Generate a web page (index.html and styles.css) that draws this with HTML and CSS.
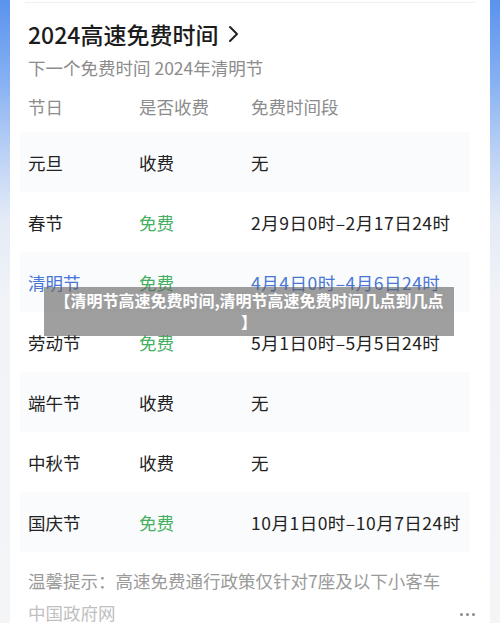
FILE: index.html
```html
<!DOCTYPE html>
<html lang="zh-CN">
<head>
<meta charset="utf-8">
<title>2024高速免费时间</title>
<link rel="stylesheet" href="styles.css">
</head>
<body>
<div class="card">
  <div class="sep"></div>
  <div class="title">2024高速免费时间
    <svg class="chev" width="12" height="18" viewBox="0 0 12 18"><polyline points="2,2 9,9 2,16" fill="none" stroke="#222" stroke-width="2" stroke-linecap="round" stroke-linejoin="round"/></svg>
  </div>
  <div class="sub">下一个免费时间 2024年清明节</div>
  <div class="table">
    <div class="row head"><span class="c1">节日</span><span class="c2">是否收费</span><span class="c3">免费时间段</span></div>
    <div class="row band"><span class="c1">元旦</span><span class="c2">收费</span><span class="c3">无</span></div>
    <div class="row"><span class="c1">春节</span><span class="c2 green">免费</span><span class="c3">2月9日0时–2月17日24时</span></div>
    <div class="row band"><span class="c1 blue">清明节</span><span class="c2 green">免费</span><span class="c3 blue">4月4日0时–4月6日24时</span></div>
    <div class="row"><span class="c1">劳动节</span><span class="c2 green">免费</span><span class="c3">5月1日0时–5月5日24时</span></div>
    <div class="row band"><span class="c1">端午节</span><span class="c2">收费</span><span class="c3">无</span></div>
    <div class="row"><span class="c1">中秋节</span><span class="c2">收费</span><span class="c3">无</span></div>
    <div class="row band"><span class="c1">国庆节</span><span class="c2 green">免费</span><span class="c3">10月1日0时–10月7日24时</span></div>
  </div>
  <div class="tip">温馨提示：高速免费通行政策仅针对7座及以下小客车</div>
  <div class="foot"><span class="src">中国政府网</span><span class="dots"><i></i><i></i><i></i></span></div>
</div>
<div class="banner"><span class="line">【清明节高速免费时间,清明节高速免费时间几点到几点</span><br>】</div>
</body>
</html>
```
FILE: styles.css
```css
html, body {
  margin: 0;
  padding: 0;
}
body {
  width: 500px;
  height: 623px;
  overflow: hidden;
  position: relative;
  font-family: "Noto Sans CJK SC", "Noto Sans", sans-serif;
  background: linear-gradient(to bottom, #5a93ee 0px, #86b0f2 80px, #b9d0f5 150px, #e4ebf6 220px, #f1f3f7 300px, #f4f5f7 623px);
}
.card {
  margin: 0 10px;
  background: #fff;
  height: 623px;
  padding: 0 18px;
  box-sizing: border-box;
}
.sep {
  height: 2px;
  margin: 0 -3px;
  border-bottom: 1px solid #eef0f3;
}
.title {
  margin-top: 15px;
  height: 32px;
  line-height: 32px;
  font-size: 23px;
  font-weight: 500;
  color: #1c1c1c;
  display: flex;
  align-items: center;
}
.chev {
  margin-left: 10px;
}
.sub {
  margin-top: 6px;
  height: 24px;
  line-height: 24px;
  font-size: 17.5px;
  color: #8c8c8c;
}
.table {
  margin: 0 2px 0 -8px;
}
.row {
  height: 60px;
  display: flex;
  align-items: center;
  padding-left: 8px;
  font-size: 17.5px;
  color: #222;
}
.row.head {
  height: 52px;
  color: #8c8c8c;
}
.band {
  background: #fafbfc;
}
.c1 { width: 111px; }
.c2 { width: 112px; }
.c3 { white-space: nowrap; letter-spacing: 0.5px; }
.head .c3 { letter-spacing: 0; }
.green { color: #45b062; }
.blue { color: #4876d6; }
.tip {
  margin-top: 15px;
  height: 28px;
  line-height: 28px;
  font-size: 17.5px;
  color: #9a9a9a;
}
.foot {
  margin-top: 5px;
  display: flex;
  align-items: center;
  justify-content: space-between;
  height: 24px;
}
.src {
  font-size: 17.5px;
  color: #c0c0c0;
}
.dots {
  display: flex;
  gap: 3px;
  margin-right: -3px;
  margin-top: 4px;
}
.dots i {
  width: 3px;
  height: 3px;
  border-radius: 50%;
  background: #8a8a8a;
}
.banner {
  position: absolute;
  left: 44px;
  top: 287px;
  width: 410px;
  height: 49px;
  box-sizing: border-box;
  padding-top: 3px;
  background: rgba(95, 95, 95, 0.6);
  color: #fff;
  font-size: 16px;
  font-weight: 700;
  line-height: 21px;
  text-align: center;
}
.line {
  white-space: nowrap;
}
```
